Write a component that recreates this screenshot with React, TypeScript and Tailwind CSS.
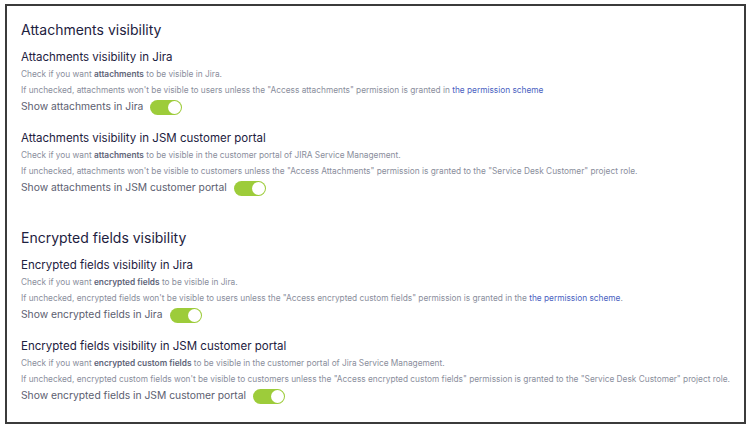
import React from "react"

type Block = {
  title: string
  check: React.ReactNode
  unchecked: React.ReactNode
  label: string
}

const LINK = "text-[#4a5fbf]"

const sections: { heading: string; blocks: Block[] }[] = [
  {
    heading: "Attachments visibility",
    blocks: [
      {
        title: "Attachments visibility in Jira",
        check: (
          <>
            Check if you want <b className="font-semibold text-[#5e6478]">attachments</b> to be visible in Jira.
          </>
        ),
        unchecked: (
          <>
            If unchecked, attachments won't be visible to users unless the "Access attachments" permission is granted in{" "}
            <span className={LINK}>the permission scheme</span>
          </>
        ),
        label: "Show attachments in Jira",
      },
      {
        title: "Attachments visibility in JSM customer portal",
        check: (
          <>
            Check if you want <b className="font-semibold text-[#5e6478]">attachments</b> to be visible in the customer portal of JIRA Service Management.
          </>
        ),
        unchecked: (
          <>
            If unchecked, attachments won't be visible to customers unless the "Access Attachments" permission is granted to the "Service Desk Customer" project role.
          </>
        ),
        label: "Show attachments in JSM customer portal",
      },
    ],
  },
  {
    heading: "Encrypted fields visibility",
    blocks: [
      {
        title: "Encrypted fields visibility in Jira",
        check: (
          <>
            Check if you want <b className="font-semibold text-[#5e6478]">encrypted fields</b> to be visible in Jira.
          </>
        ),
        unchecked: (
          <>
            If unchecked, encrypted fields won't be visible to users unless the "Access encrypted custom fields" permission is granted in the{" "}
            <span className={LINK}>the permission scheme</span>.
          </>
        ),
        label: "Show encrypted fields in Jira",
      },
      {
        title: "Encrypted fields visibility in JSM customer portal",
        check: (
          <>
            Check if you want <b className="font-semibold text-[#5e6478]">encrypted custom fields</b> to be visible in the customer portal of Jira Service Management.
          </>
        ),
        unchecked: (
          <>
            If unchecked, encrypted custom fields won't be visible to customers unless the "Access encrypted custom fields" permission is granted to the "Service Desk Customer" project role.
          </>
        ),
        label: "Show encrypted fields in JSM customer portal",
      },
    ],
  },
]

function Toggle() {
  return (
    <div className="flex h-[15px] w-[32px] items-center justify-end rounded-full bg-[#9dcc3a] px-[1px]">
      <div className="h-[13px] w-[13px] rounded-full bg-white" />
    </div>
  )
}

function Setting({ block }: { block: Block }) {
  return (
    <div className="flex flex-col">
      <div className="h-[18px] text-[11.5px] leading-[18px] text-[#1d2140]">{block.title}</div>
      <div className="h-[16px] text-[8.3px] leading-[16px] text-[#8a8e9c]">{block.check}</div>
      <div className="h-[16px] text-[8.3px] leading-[16px] text-[#8a8e9c]">{block.unchecked}</div>
      <div className="flex h-[18px] items-center gap-[7px]">
        <span className="text-[10.3px] text-[#5c6070]">{block.label}</span>
        <Toggle />
      </div>
    </div>
  )
}

export default function App() {
  return (
    <div className="h-[430px] w-[752px] bg-white pl-[5px] pt-[4px]" style={{ fontFamily: "Inter, 'Noto Sans', sans-serif" }}>
      <div className="flex h-[420px] w-[741px] flex-col border-2 border-[#3b3b3b] px-[14px] pt-[12px]">
        {sections.map((section, si) => (
          <div key={section.heading} className={si === 0 ? "flex flex-col" : "mt-[29px] flex flex-col"}>
            <div className="h-[24px] text-[14px] leading-[24px] text-[#1d2140]">{section.heading}</div>
            <div className="mt-[6px] flex flex-col gap-[13px]">
              {section.blocks.map((b) => (
                <Setting key={b.title} block={b} />
              ))}
            </div>
          </div>
        ))}
      </div>
    </div>
  )
}
